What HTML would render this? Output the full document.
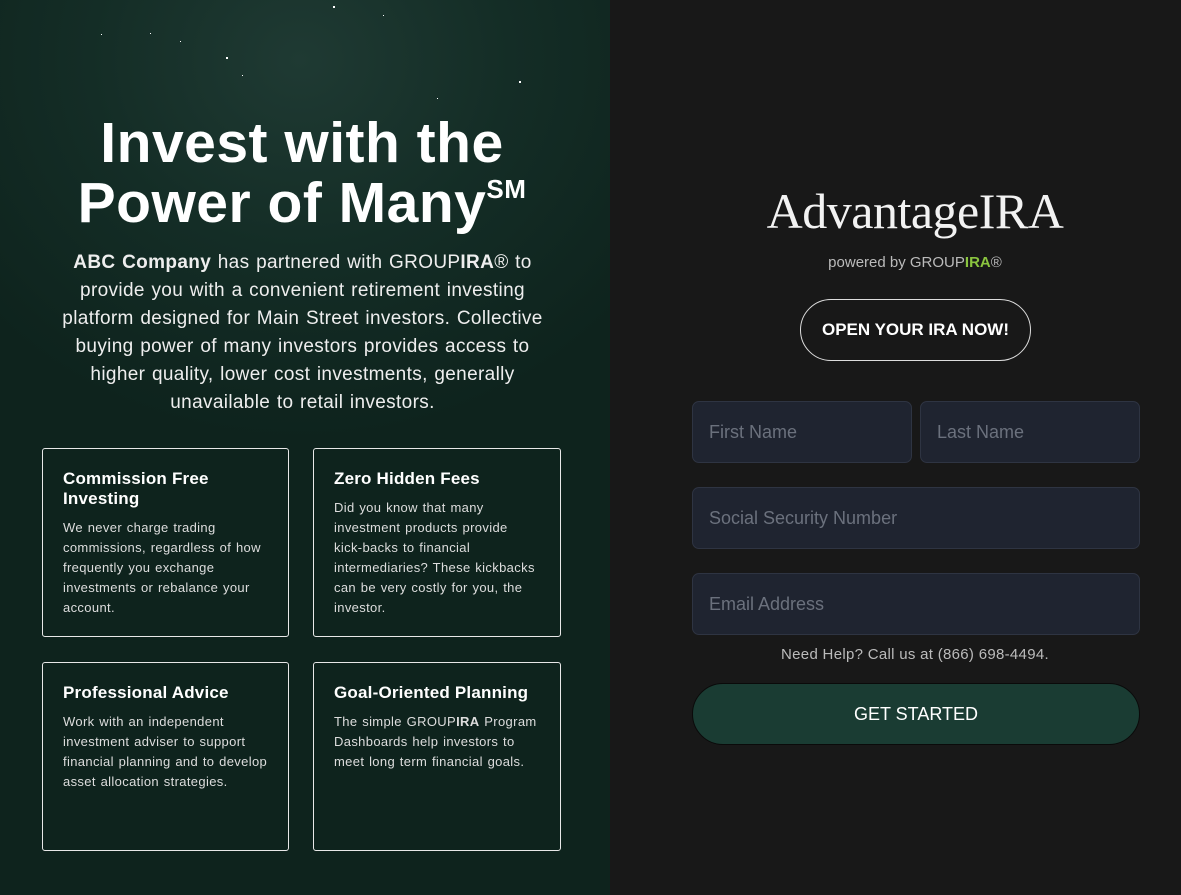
<!DOCTYPE html>
<html><head><style>
*{margin:0;padding:0;box-sizing:border-box}
body{width:1181px;height:895px;overflow:hidden;background:#181818;font-family:"Liberation Sans",sans-serif;color:#fff;position:relative}
#left{position:absolute;left:0;top:0;width:610px;height:895px;background:radial-gradient(ellipse 420px 380px at 300px 60px,#1f3a33 0%,#142d26 50%,#0e231d 100%);}
.star{position:absolute;background:#fff;width:2px;height:2px}
h1{position:absolute;left:0;width:604px;top:113px;text-align:center;font-size:57px;line-height:60px;font-weight:bold;letter-spacing:0.5px}
h1 sup{font-size:26px;line-height:0;position:relative;top:-24px;vertical-align:baseline;font-weight:bold}
.intro{position:absolute;left:45px;width:515px;top:249px;text-align:center;font-size:19px;line-height:28px;color:#eee;letter-spacing:0.35px;word-spacing:1px}
.card{position:absolute;width:247px;height:189px;border:1px solid #e8e8e8;border-radius:3px;padding:20px 20px}
.card h3{font-size:17px;line-height:20px;font-weight:bold;margin-bottom:9px;letter-spacing:0.2px}
.card p{font-size:13px;line-height:20px;color:#ddd;letter-spacing:0.35px;word-spacing:0.8px;hyphens:none}
.logo{position:absolute;left:690px;width:450px;top:182px;text-align:center;font-family:"Liberation Serif",serif;font-size:50px;color:#f2f2f2;letter-spacing:-0.5px}
.pw{position:absolute;left:690px;width:450px;top:254px;text-align:center;font-size:15px;color:#bbb}
.pw b{color:#8ac43f}
.open{position:absolute;left:800px;top:299px;width:231px;height:62px;border:1.5px solid #ddd;border-radius:31px;text-align:center;line-height:60px;font-weight:bold;font-size:17px}
.in{position:absolute;background:#1f2430;border:1px solid #2e3442;border-radius:7px;height:62px;color:#6b717d;font-size:18px;line-height:60px;padding-left:16px}
.help{position:absolute;left:690px;width:450px;top:646px;text-align:center;font-size:15px;color:#bbb;letter-spacing:0.3px}
.go{position:absolute;left:692px;top:683px;width:448px;height:62px;background:#1a3c33;border:1px solid #0a0a0a;border-radius:31px;text-align:center;line-height:60px;font-size:18px}
</style></head><body>
<div id="left">
<div class="star" style="left:333px;top:6px"></div><div class="star" style="left:383px;top:15px;width:1px;height:1px"></div>
<div class="star" style="left:101px;top:34px;width:1px;height:1px"></div><div class="star" style="left:150px;top:33px;width:1px;height:1px"></div>
<div class="star" style="left:180px;top:41px;width:1px;height:1px"></div><div class="star" style="left:226px;top:57px"></div>
<div class="star" style="left:242px;top:75px;width:1px;height:1px"></div><div class="star" style="left:519px;top:81px"></div>
<div class="star" style="left:437px;top:98px;width:1px;height:1px"></div>
<h1>Invest with the<br>Power of Many<sup>SM</sup></h1>
<div class="intro"><b>ABC Company</b> has partnered with GROUP<b>IRA</b>® to provide you with a convenient retirement investing platform designed for Main Street investors. Collective buying power of many investors provides access to higher quality, lower cost investments, generally unavailable to retail investors.</div>
<div class="card" style="left:42px;top:448px"><h3>Commission Free Investing</h3><p>We never charge trading commissions, regardless of how frequently you exchange investments or rebalance your account.</p></div>
<div class="card" style="left:313px;top:448px;width:248px"><h3>Zero Hidden Fees</h3><p>Did you know that many<br>investment products provide<br><span style="white-space:nowrap">kick-backs</span> to financial intermediaries? These kickbacks can be very costly for you, the investor.</p></div>
<div class="card" style="left:42px;top:662px"><h3>Professional Advice</h3><p>Work with an independent investment adviser to support financial planning and to develop asset allocation strategies.</p></div>
<div class="card" style="left:313px;top:662px;width:248px"><h3>Goal-Oriented Planning</h3><p>The simple GROUP<b>IRA</b> Program Dashboards help investors to meet long term financial goals.</p></div>
</div>
<div class="logo">AdvantageIRA</div>
<div class="pw">powered by GROUP<b>IRA</b>®</div>
<div class="open">OPEN YOUR IRA NOW!</div>
<div class="in" style="left:692px;top:401px;width:220px">First Name</div>
<div class="in" style="left:920px;top:401px;width:220px">Last Name</div>
<div class="in" style="left:692px;top:487px;width:448px">Social Security Number</div>
<div class="in" style="left:692px;top:573px;width:448px">Email Address</div>
<div class="help">Need Help? Call us at (866) 698-4494.</div>
<div class="go">GET STARTED</div>
</body></html>
